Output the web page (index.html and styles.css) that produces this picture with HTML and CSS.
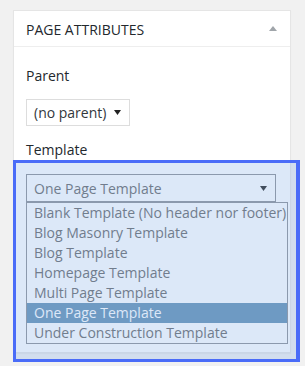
FILE: index.html
```html
<!DOCTYPE html>
<html lang="en">
<head>
    <meta charset="UTF-8">
    <meta name="viewport" content="width=device-width, initial-scale=1.0">
    <title>Page Attributes</title>
    <link rel="stylesheet" href="styles.css">
</head>
<body>
    <!-- Page attributes meta box -->
    <div class="postbox">
        <div class="postbox-header">
            <h2 class="hndle">Page Attributes</h2>
            <svg class="toggle" width="8" height="5" viewBox="0 0 8 5"><polygon points="4,0 8,5 0,5" fill="#a0a5aa"/></svg>
        </div>
        <div class="inside">
            <p class="label label-parent">Parent</p>
            <div class="select select-parent">
                <span>(no parent)</span>
                <svg width="7" height="5" viewBox="0 0 7 5"><polygon points="0,0 7,0 3.5,5" fill="#222"/></svg>
            </div>
            <p class="label label-template">Template</p>
            <div class="select select-template">
                <span>One Page Template</span>
                <svg width="7" height="5" viewBox="0 0 7 5"><polygon points="0,0 7,0 3.5,5" fill="#222"/></svg>
            </div>
            <ul class="options">
                <li>Blank Template (No header nor footer)</li>
                <li>Blog Masonry Template</li>
                <li>Blog Template</li>
                <li>Homepage Template</li>
                <li>Multi Page Template</li>
                <li class="selected">One Page Template</li>
                <li>Under Construction Template</li>
            </ul>
        </div>
    </div>

    <!-- highlight over the template field -->
    <div class="highlight"></div>
</body>
</html>
```

FILE: styles.css
```css
/* General styles */
body {
    margin: 0;
    padding: 10px 0 0 13px;
    background: #f1f1f1;
    font-family: 'Open Sans', sans-serif;
    font-size: 14px;
    color: #32373c;
    position: relative;
    height: 356px;
}

.postbox {
    width: 276px;
    background: #fff;
    border: 1px solid #e5e5e5;
    box-shadow: 0 1px 1px rgba(0, 0, 0, 0.04);
}

.postbox-header {
    display: flex;
    align-items: center;
    justify-content: space-between;
    height: 35px;
    padding: 0 13px 0 12px;
    border-bottom: 1px solid #eee;
}

.hndle {
    margin: 0;
    font-size: 14px;
    font-weight: 400;
    line-height: 20px;
    color: #23282d;
    text-transform: uppercase;
    padding-top: 2px;
}

.toggle {
    margin-top: -1px;
}

.inside {
    padding: 0 12px 8px;
}

.label {
    margin: 0;
    line-height: 20px;
    color: #23282d;
}

.label-parent {
    margin-top: 19px;
}

.label-template {
    margin-top: 14px;
}

/* closed selects */
.select {
    display: flex;
    align-items: center;
    justify-content: space-between;
    box-sizing: border-box;
    height: 28px;
    padding: 0 8px 0 7px;
    border: 1px solid #ddd;
    background: #fff;
    color: #32373c;
}

.select-parent {
    width: 104px;
    height: 27px;
    margin-top: 13px;
}

.select-template {
    width: 250px;
    margin-top: 14px;
    border-color: #8c8f94;
    color: #666;
}

/* open dropdown list */
.options {
    list-style: none;
    margin: 0;
    padding: 0;
    width: 260px;
    border: 1px solid #8c8f94;
    background: #fff;
    color: #666;
}

.options li {
    height: 20px;
    line-height: 20px;
    padding-left: 7px;
    white-space: nowrap;
}

.options .selected {
    background: #6290b4;
    color: #fff;
}

.highlight {
    position: absolute;
    left: 13px;
    top: 160px;
    width: 280px;
    height: 196px;
    border: 3px solid #4a6cf8;
    border-right-width: 4px;
    background: rgba(138, 178, 232, 0.3);
}
```
